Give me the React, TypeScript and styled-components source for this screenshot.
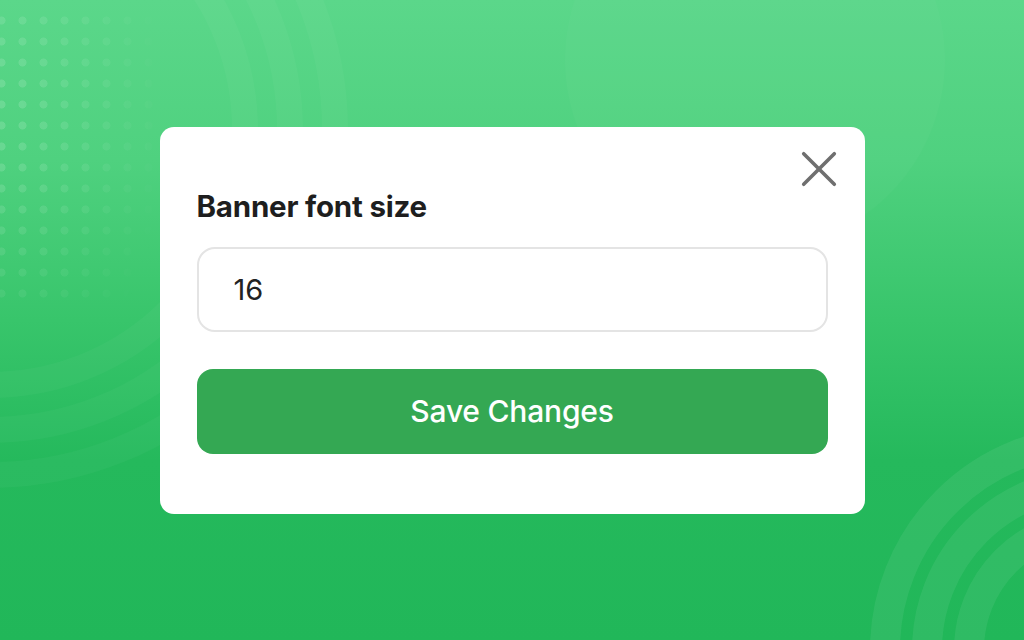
import { useState } from "react";
import styled, { createGlobalStyle } from "styled-components";

const GlobalStyle = createGlobalStyle`
  * { box-sizing: border-box; }
  html, body { margin: 0; padding: 0; }
  body {
    font-family: "Inter", "Noto Sans", sans-serif;
    -webkit-font-smoothing: antialiased;
  }
`;

export default function App() {
  const [size, setSize] = useState("16");

  return (
    <StPage>
      <GlobalStyle />
      <StDots />
      <StBackdrop viewBox="0 0 1024 640" preserveAspectRatio="none" aria-hidden>
        <circle cx="755" cy="60" r="190" fill="rgba(255,255,255,0.025)" />
        <g fill="none" stroke="rgba(255,255,255,0.03)" strokeWidth="26">
          <circle cx="-10" cy="130" r="255" />
          <circle cx="-10" cy="130" r="300" />
          <circle cx="-10" cy="130" r="345" />
        </g>
        <g fill="none" stroke="rgba(255,255,255,0.065)" strokeWidth="30">
          <circle cx="1095" cy="650" r="210" />
          <circle cx="1095" cy="650" r="168" />
          <circle cx="1095" cy="650" r="126" />
        </g>
      </StBackdrop>

      <StModal>
        <StClose aria-label="Close">
          <svg width="40" height="40" viewBox="0 0 40 40">
            <path
              d="M3 3 L37 37 M37 3 L3 37"
              stroke="#6f6f6f"
              strokeWidth="4"
              strokeLinecap="round"
            />
          </svg>
        </StClose>
        <StLabel htmlFor="banner-size">Banner font size</StLabel>
        <StInput
          id="banner-size"
          value={size}
          onChange={(e) => setSize(e.target.value)}
        />
        <StButton>Save Changes</StButton>
      </StModal>
    </StPage>
  );
}

const StPage = styled.div`
  position: relative;
  overflow: hidden;
  width: 100vw;
  height: 100vh;
  display: flex;
  align-items: center;
  justify-content: center;
  background: linear-gradient(
    180deg,
    #5bd78a 0%,
    #4fd17f 25%,
    #38c56b 50%,
    #25b95c 72%,
    #21b759 100%
  );
`;

const StDots = styled.div`
  position: absolute;
  left: -9px;
  top: 10px;
  width: 180px;
  height: 300px;
  background-image: radial-gradient(
    circle,
    rgba(255, 255, 255, 0.14) 3.8px,
    transparent 4.3px
  );
  background-size: 21px 21px;
  -webkit-mask-image: radial-gradient(
    ellipse 100% 100% at 0% 35%,
    #000 15%,
    transparent 100%
  );
  mask-image: radial-gradient(
    ellipse 100% 100% at 0% 35%,
    #000 15%,
    transparent 100%
  );
`;

const StBackdrop = styled.svg`
  position: absolute;
  inset: 0;
  width: 100%;
  height: 100%;
  pointer-events: none;
`;

const StModal = styled.div`
  position: relative;
  z-index: 1;
  width: 705px;
  display: flex;
  flex-direction: column;
  padding: 61px 37px 60px;
  background: #ffffff;
  border-radius: 14px;
`;

const StClose = styled.button`
  position: absolute;
  top: 24px;
  right: 28px;
  width: 36px;
  height: 36px;
  padding: 0;
  border: none;
  background: none;
  display: flex;
  align-items: center;
  justify-content: center;
  cursor: pointer;

  svg {
    width: 36px;
    height: 36px;
  }
`;

const StLabel = styled.label`
  font-size: 29.5px;
  line-height: 36px;
  font-weight: 700;
  color: #1e1e1e;
  letter-spacing: -0.2px;
  margin-bottom: 23px;
`;

const StInput = styled.input`
  height: 85px;
  width: 100%;
  padding: 0 35px;
  border: 2px solid #e4e4e4;
  border-radius: 18px;
  font-family: "Inter", sans-serif;
  font-size: 29px;
  font-weight: 400;
  color: #222222;
  outline: none;
  background: #ffffff;
`;

const StButton = styled.button`
  margin-top: 37px;
  height: 85px;
  width: 100%;
  border: none;
  border-radius: 16px;
  background: #34a853;
  color: #ffffff;
  font-family: "Inter", sans-serif;
  font-size: 30px;
  font-weight: 500;
  letter-spacing: -0.2px;
  cursor: pointer;
`;
